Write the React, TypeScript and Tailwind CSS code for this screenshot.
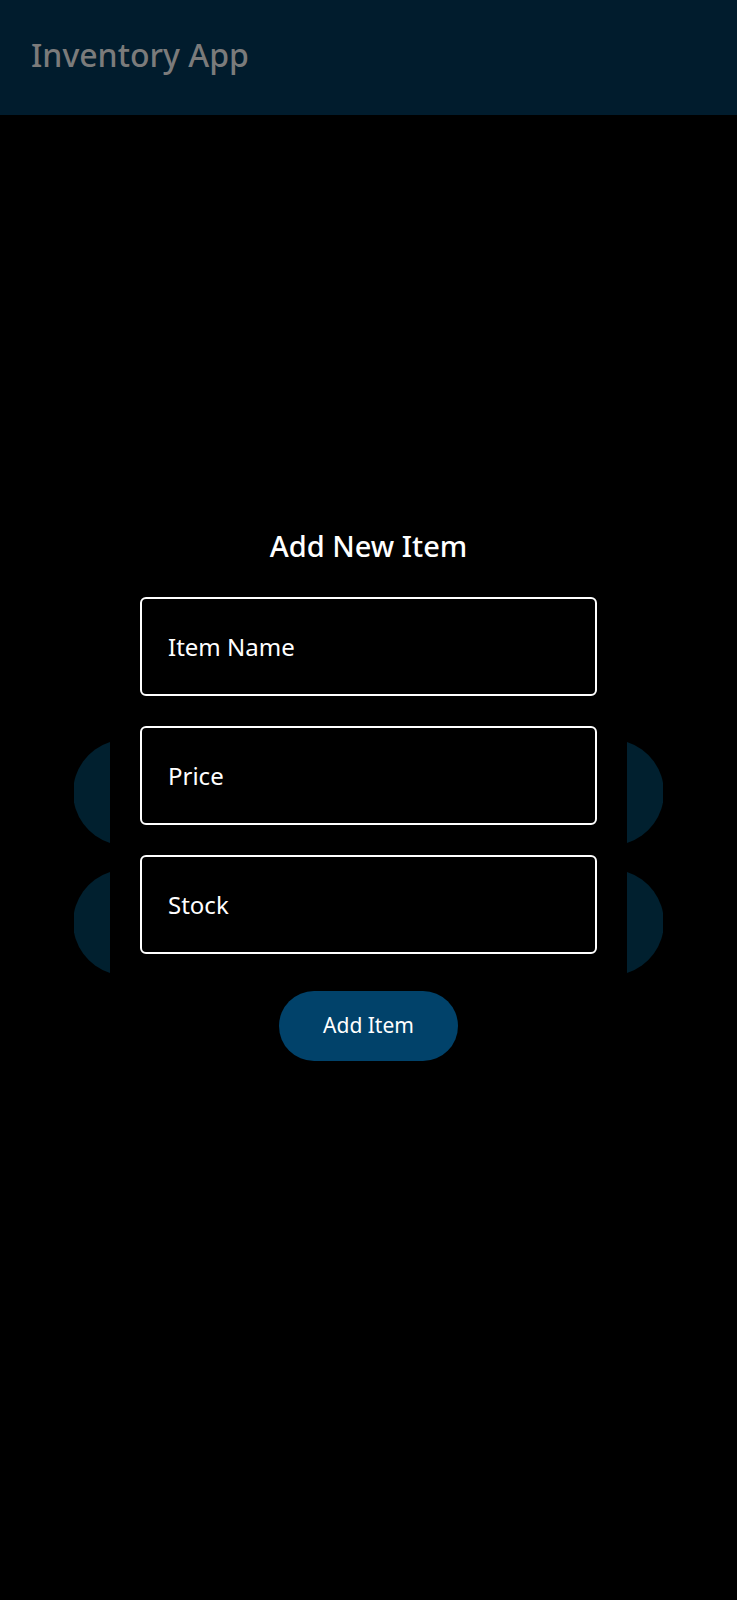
import { useState } from "react";

function SideShape({ side }: { side: "left" | "right" }) {
    // clipped circle segment that peeks out beside the form
    return (
        <svg width="36" height="101" viewBox="0 0 36 101" className="block">
            {side === "left" ? (
                <path d="M36 0 A53 53 0 0 0 36 101 Z" fill="#01202f" />
            ) : (
                <path d="M0 0 A53 53 0 0 1 0 101 Z" fill="#01202f" />
            )}
        </svg>
    );
}

function Field({ placeholder, value, onChange }: { placeholder: string; value: string; onChange: (v: string) => void }) {
    return (
        <input
            value={value}
            onChange={(e) => onChange(e.target.value)}
            placeholder={placeholder}
            className="w-[457px] h-[99px] border-2 border-white rounded-[6px] bg-black px-[26px] text-[24px] text-white placeholder:text-white outline-none"
        />
    );
}

export default function App() {
    const [name, setName] = useState("");
    const [price, setPrice] = useState("");
    const [stock, setStock] = useState("");

    return (
        <div className="min-h-screen w-full bg-black" style={{ fontFamily: '"Noto Sans", "Open Sans", sans-serif' }}>
            <header className="h-[115px] bg-[#011c2d] pl-[31px] pt-[35px]">
                <span className="text-[32px] leading-[40px] font-medium text-[#7b7b7b]">Inventory App</span>
            </header>

            <main className="relative flex flex-col items-center pt-[413px]">
                <div className="absolute left-[74px] top-[627px] flex flex-col gap-[29px]">
                    <SideShape side="left" />
                    <SideShape side="left" />
                </div>
                <div className="absolute left-[627px] top-[627px] flex flex-col gap-[29px]">
                    <SideShape side="right" />
                    <SideShape side="right" />
                </div>

                <h1 className="text-[29px] leading-[36px] font-medium text-white">Add New Item</h1>

                <div className="mt-[33px] flex flex-col gap-[30px]">
                    <Field placeholder="Item Name" value={name} onChange={setName} />
                    <Field placeholder="Price" value={price} onChange={setPrice} />
                    <Field placeholder="Stock" value={stock} onChange={setStock} />
                </div>

                <button className="mt-[37px] w-[179px] h-[70px] rounded-full bg-[#01426a] text-[21px] text-white">
                    Add Item
                </button>
            </main>
        </div>
    );
}
